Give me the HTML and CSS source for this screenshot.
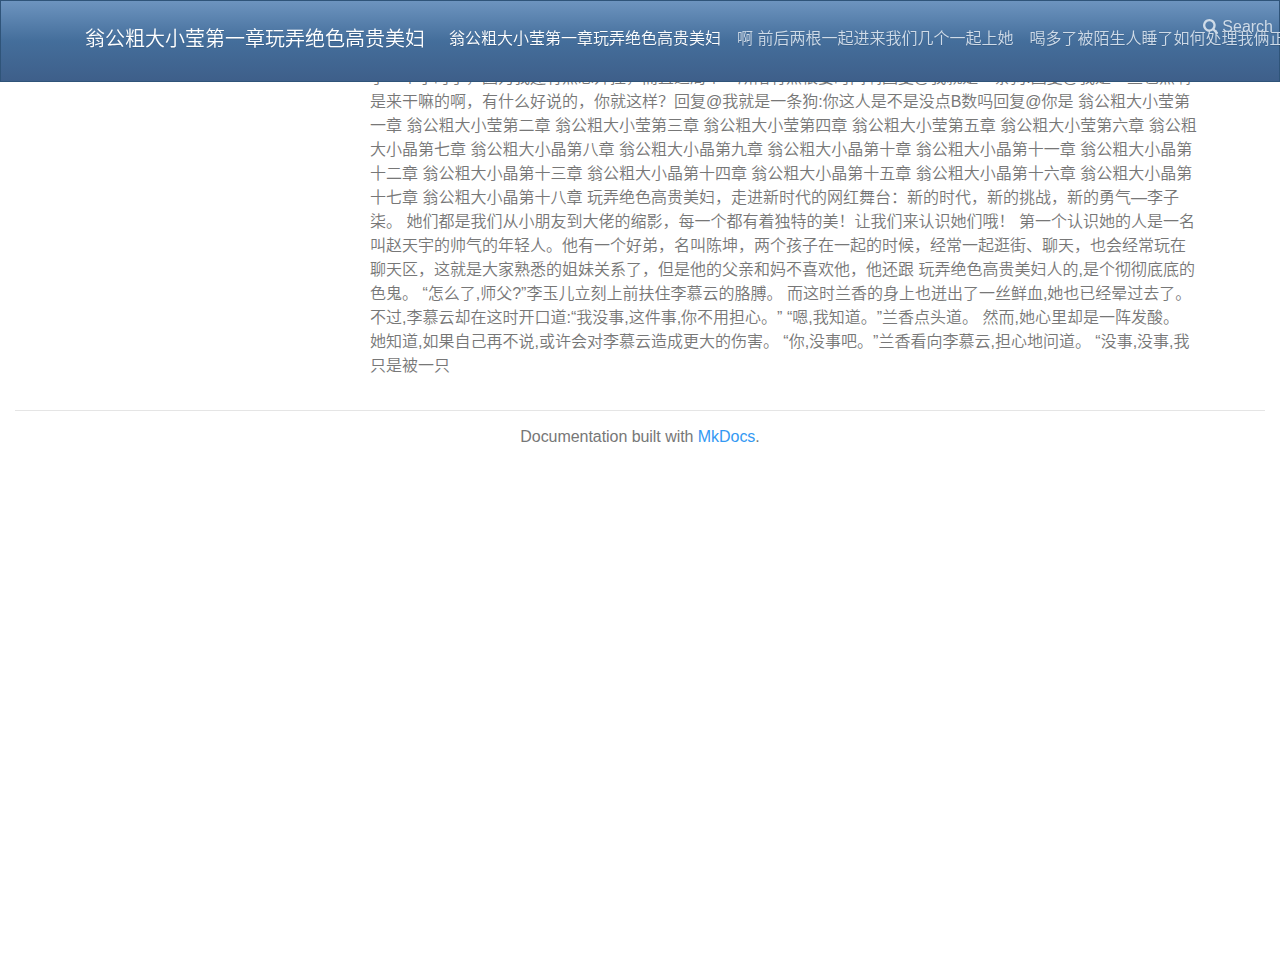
FILE: index.html
```html
<!DOCTYPE html>
<html lang="zh-CN">
<head>
  <meta charset="UTF-8">
  <meta name="viewport" content="width=device-width, initial-scale=1.0">
  <title>翁公粗大小莹第一章玩弄绝色高贵美妇</title>
  <link rel="stylesheet" href="styles.css">
</head>
<body>
  <header class="navbar">
    <div class="navbar-container">
      <a class="navbar-brand" href="#">翁公粗大小莹第一章玩弄绝色高贵美妇</a>
      <nav class="navbar-nav">
        <a class="nav-link active" href="#">翁公粗大小莹第一章玩弄绝色高贵美妇</a>
        <a class="nav-link" href="#">啊 前后两根一起进来我们几个一起上她</a>
        <a class="nav-link" href="#">喝多了被陌生人睡了如何处理我俩正</a>
      </nav>
    </div>
    <a class="nav-link search-link" href="#">
      <svg class="search-icon" viewBox="0 0 1664 1664" aria-hidden="true">
        <path d="M1152 704q0-185-131.500-316.500T704 256 387.500 387.500 256 704t131.500 316.500T704 1152t316.500-131.500T1152 704zm512 832q0 52-38 90t-90 38q-54 0-90-38l-343-342q-179 124-399 124-143 0-273.500-55.500t-225-150-150-225T0 704t55.500-273.500 150-225 225-150T704 0t273.500 55.500 225 150 150 225T1408 704q0 220-124 399l343 343q37 37 37 90z"/>
      </svg>
      Search
    </a>
  </header>

  <main class="container">
    <div class="content">
      <p>
        了一个小时了，因为我还有点想开挂，而且这局个一所陪有点很要时间啊回复@我就是一条狗:回复@我是一些也点啊<br>
        是来干嘛的啊，有什么好说的，你就这样？回复@我就是一条狗:你这人是不是没点B数吗回复@你是 翁公粗大小莹第<br>
        一章 翁公粗大小莹第二章 翁公粗大小莹第三章 翁公粗大小莹第四章 翁公粗大小莹第五章 翁公粗大小莹第六章 翁公粗<br>
        大小晶第七章 翁公粗大小晶第八章 翁公粗大小晶第九章 翁公粗大小晶第十章 翁公粗大小晶第十一章 翁公粗大小晶第<br>
        十二章 翁公粗大小晶第十三章 翁公粗大小晶第十四章 翁公粗大小晶第十五章 翁公粗大小晶第十六章 翁公粗大小晶第<br>
        十七章 翁公粗大小晶第十八章 玩弄绝色高贵美妇，走进新时代的网红舞台：新的时代，新的挑战，新的勇气—李子<br>
        柒。 她们都是我们从小朋友到大佬的缩影，每一个都有着独特的美！让我们来认识她们哦！ 第一个认识她的人是一名<br>
        叫赵天宇的帅气的年轻人。他有一个好弟，名叫陈坤，两个孩子在一起的时候，经常一起逛街、聊天，也会经常玩在<br>
        聊天区，这就是大家熟悉的姐妹关系了，但是他的父亲和妈不喜欢他，他还跟 玩弄绝色高贵美妇人的,是个彻彻底底的<br>
        色鬼。 “怎么了,师父?”李玉儿立刻上前扶住李慕云的胳膊。 而这时兰香的身上也迸出了一丝鲜血,她也已经晕过去了。<br>
        不过,李慕云却在这时开口道:“我没事,这件事,你不用担心。” “嗯,我知道。”兰香点头道。 然而,她心里却是一阵发酸。<br>
        她知道,如果自己再不说,或许会对李慕云造成更大的伤害。 “你,没事吧。”兰香看向李慕云,担心地问道。 “没事,没事,我<br>
        只是被一只
      </p>
    </div>
  </main>

  <footer>
    <hr>
    <p>Documentation built with <a href="#">MkDocs</a>.</p>
  </footer>
</body>
</html>
```
FILE: styles.css
```css
* {
  box-sizing: border-box;
}
body {
  margin: 0;
  padding-top: 66px;
  overflow: hidden;
  background: #fff;
  color: #777;
  font-family: "Liberation Sans", "Noto Sans CJK SC", sans-serif;
  font-size: 16px;
  font-weight: 350;
  line-height: 24px;
  text-spacing-trim: space-all; /* Keep full-width punctuation full width */
}
a {
  color: #3399f3;
  text-decoration: none;
}

/* Navbar */
.navbar {
  position: fixed;
  top: 0;
  left: 0;
  right: 0;
  z-index: 10;
  height: 82px;
  border: 1px solid #2f5479;
  background: linear-gradient(#6d94bf, #446e9b 50%, #3e5f8a);
  text-shadow: 0 1px 0 rgba(0, 0, 0, 0.1);
}
.navbar-container {
  display: flex;
  align-items: center;
  height: 76px;
  padding-left: 84px;
  white-space: nowrap;
}
.navbar-brand {
  margin-right: 16px;
  color: #fff;
  font-size: 20px;
  line-height: 30px;
}
.navbar-nav {
  display: flex;
}
.nav-link {
  padding: 0 8px;
  color: #cfdbe8;
}
.nav-link.active {
  color: #fff;
}
/* Sits over the end of the menu when the titles run long */
.search-link {
  position: absolute;
  top: 14px;
  right: -2px;
}
.search-icon {
  width: 15px;
  height: 15px;
  vertical-align: -2px;
  fill: currentColor;
}

/* Page content */
.container {
  width: 1140px;
  margin: 0 auto;
  padding: 0 15px;
}
.content {
  margin-left: 285px;
  white-space: nowrap;
}
.content p {
  margin: 0;
}

/* Footer */
footer {
  padding: 0 15px;
  text-align: center;
}
footer hr {
  margin: 32px 0 14px;
  border: 0;
  border-top: 1px solid #e5e5e5;
}
footer p {
  margin: 0;
  letter-spacing: -0.05px;
}
```
